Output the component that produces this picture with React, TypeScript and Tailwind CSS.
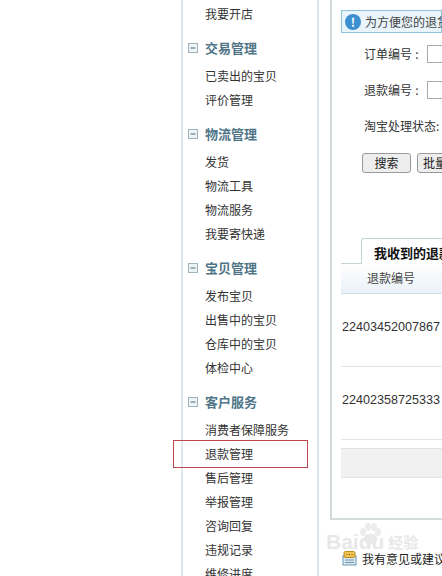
const groups = [
  { title: '交易管理', items: ['已卖出的宝贝', '评价管理'] },
  { title: '物流管理', items: ['发货', '物流工具', '物流服务', '我要寄快递'] },
  { title: '宝贝管理', items: ['发布宝贝', '出售中的宝贝', '仓库中的宝贝', '体检中心'] },
  { title: '客户服务', items: ['消费者保障服务', '退款管理', '售后管理', '举报管理', '咨询回复', '违规记录', '维修进度'] },
];

function MinusBox() {
  return (
    <svg width="10" height="10" viewBox="0 0 10 10" className="shrink-0">
      <rect x="0.5" y="0.5" width="9" height="9" fill="#eef3f5" stroke="#9db4bf" />
      <path d="M2.5 5H7.5" stroke="#4d6f80" />
    </svg>
  );
}

function Sidebar() {
  return (
    <div className="h-[576px] w-[138px] shrink-0 overflow-hidden border-x-2 border-x-[#dde8ee] bg-white pt-[2px] pl-[22px] text-[12px]">
      <div className="h-6 leading-6 text-[#333]">我要开店</div>
      {groups.map((group) => (
        <div key={group.title} className="mt-[10px]">
          <div className="-ml-[17px] flex h-[24px] items-center gap-[7px]">
            <MinusBox />
            <span className="text-[13px] font-bold text-[#4f7587]">{group.title}</span>
          </div>
          <div className="mt-[4px]">
            {group.items.map((item) => (
              <div key={item} className="h-6 leading-6 whitespace-nowrap text-[#333]">
                {item}
              </div>
            ))}
          </div>
        </div>
      ))}
    </div>
  );
}

function FormRow({ label }: { label: string }) {
  return (
    <div className="flex h-9 items-center whitespace-nowrap text-[#333]">
      <span className="w-[48px] shrink-0">{label}</span>
      <span className="w-[10px] shrink-0 text-center">:</span>
      <span className="ml-[5px] h-[18px] w-[40px] shrink-0 border border-[#aaa] bg-white" />
    </div>
  );
}

function RefundRow({ id }: { id: string }) {
  return (
    <div className="h-[73px] border-b border-[#e4e4e4] pt-[22px] font-['Liberation_Sans',sans-serif] text-[12.6px] leading-[22px] text-[#333]">
      <span className="block pl-[1px] whitespace-nowrap">{id}</span>
    </div>
  );
}

function Content() {
  return (
    <div className="ml-[11px] h-[520px] w-[112px] shrink-0 overflow-hidden border-b-2 border-l-2 border-[#d3dcdc] bg-white pt-[10px] pl-[9px] text-[12px]">
      <div className="flex h-[23px] items-center gap-[4px] border border-[#8fc3dc] bg-[#e9f5fb] pl-[3px] whitespace-nowrap text-[#444]">
        <span className="flex size-[16px] shrink-0 items-center justify-center rounded-full bg-[#3c8fd0] text-[12px] leading-none font-bold text-white">
          !
        </span>
        为方便您的退货退款
      </div>
      <div className="mt-[3px] ml-[23px]">
        <FormRow label="订单编号" />
        <FormRow label="退款编号" />
        <div className="flex h-9 items-center whitespace-nowrap text-[#333]">淘宝处理状态:</div>
      </div>
      <div className="mt-[9px] ml-[21px] flex gap-[6px]">
        <button className="h-[20px] w-[49px] shrink-0 rounded-[3px] border border-[#999] bg-[#eeeeee] text-[#222]">搜索</button>
        <button className="h-[20px] shrink-0 rounded-[3px] border border-[#999] bg-[#eeeeee] px-[5px] whitespace-nowrap text-[#222]">批量退款</button>
      </div>
      <div className="mt-[65px] flex h-[26px]">
        <div className="w-[20px] shrink-0 border-b border-[#c5d3d8]" />
        <div className="min-w-0 flex-1 rounded-tl-[3px] border-t border-l border-[#c5d3d8] bg-white pl-[12px] text-[13px] leading-[27px] font-bold whitespace-nowrap text-[#111]">
          我收到的退款申请
        </div>
      </div>
      <div className="h-[30px] border-b border-[#cfdfe8] bg-gradient-to-b from-white to-[#eaf2f9] pl-[26px] leading-[28px] text-[#444]">
        退款编号
      </div>
      <RefundRow id="22403452007867" />
      <RefundRow id="22402358725333" />
      <div className="mt-[8px] h-[30px] border-y border-[#e2e2e2] bg-[#f1f1f1]" />
    </div>
  );
}

export default function App() {
  return (
    <div className="relative h-[576px] w-[442px] overflow-hidden bg-white font-['Noto_Sans_CJK_SC',sans-serif]">
      <div className="flex pl-[181px]">
        <Sidebar />
        <Content />
      </div>

      {/* red highlight around the refund entry */}
      <div className="absolute top-[440px] left-[173px] h-[28px] w-[135px] border border-[#c0474d]" />

      {/* baidu watermark */}
      <svg width="24" height="22" viewBox="0 0 24 22" className="absolute top-[523px] left-[358px]">
        <g fill="#ececec">
          <ellipse cx="5" cy="9" rx="3" ry="4" />
          <ellipse cx="10" cy="4" rx="3" ry="4" />
          <ellipse cx="16" cy="4" rx="3" ry="4" />
          <ellipse cx="20" cy="9" rx="3" ry="4" />
          <ellipse cx="12.5" cy="16" rx="7" ry="5.5" />
        </g>
      </svg>
      <div className="absolute top-[531px] left-[326px] flex h-[20px] items-center gap-[4px] font-['Liberation_Sans',sans-serif] text-[21px] leading-none font-bold whitespace-nowrap text-[#e8e8e8]">
        Baidu<span className="font-['Noto_Sans_CJK_SC',sans-serif] text-[15px]">经验</span>
      </div>

      {/* feedback link */}
      <div className="absolute top-[551px] left-[342px] flex h-[15px] items-center gap-[5px] text-[12px] leading-[15px] whitespace-nowrap text-[#222]">
        <svg width="15" height="15" viewBox="0 0 15 15" className="shrink-0">
          <rect x="1" y="5" width="13" height="9" fill="#dbe9f2" stroke="#6f97b3" />
          <path d="M3 9H12M3 11.5H12" stroke="#6f97b3" />
          <rect x="2" y="0.5" width="11" height="6" rx="1.5" fill="#f2c14e" stroke="#b98a20" />
          <path d="M4.5 3.5H5.5M7 3.5H8M9.5 3.5H10.5" stroke="#7a5a10" />
        </svg>
        我有意见或建议
      </div>
    </div>
  );
}
